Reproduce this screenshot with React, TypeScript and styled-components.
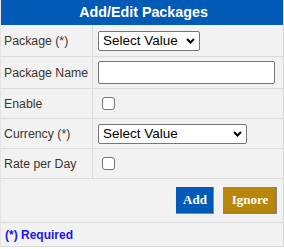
import React from "react";
import styled, { createGlobalStyle } from "styled-components";

const Global = createGlobalStyle`
  html, body { margin: 0; padding: 0; background: #ffffff; }
  body { font-family: Arial, "Liberation Sans", sans-serif; }
`;

const Panel = styled.div`
  width: 284px;
  box-sizing: border-box;
  border-right: 1px solid #d6d6d6;
  border-left: 1px solid #e4e4e4;
  background: #f2f2f2;
  display: flex;
  flex-direction: column;
`;

const Header = styled.div`
  height: 25px;
  background: #015bb6;
  color: #ffffff;
  font: bold 14.3px Arial, "Liberation Sans", sans-serif;
  display: flex;
  align-items: center;
  justify-content: center;
  box-sizing: border-box;
  padding-bottom: 1px;
  padding-left: 3px;
`;

const Row = styled.div<{ $h: number }>`
  display: grid;
  grid-template-columns: 92px 1fr;
  height: ${(p) => p.$h}px;
  border-bottom: 1px solid #dadada;
  box-sizing: border-box;
`;

const Label = styled.div`
  border-right: 1px solid #dadada;
  display: flex;
  align-items: center;
  padding-left: 3px;
  font: 12.3px Arial, "Liberation Sans", sans-serif;
  color: #3a3530;
`;

const Value = styled.div`
  display: flex;
  align-items: center;
  padding-left: 5px;
`;

const SelectWrap = styled.div<{ $w: number }>`
  position: relative;
  width: ${(p) => p.$w}px;
  height: 20px;
`;

const Select = styled.select`
  appearance: none;
  -webkit-appearance: none;
  width: 100%;
  height: 100%;
  box-sizing: border-box;
  border: 1px solid #767676;
  border-radius: 2px;
  background: #ffffff;
  font: 13.5px Arial, "Liberation Sans", sans-serif;
  color: #000000;
  padding: 0 0 0 4px;
  margin: 0;
  outline: none;
`;

const Chevron = styled.svg`
  position: absolute;
  right: 5px;
  top: 7px;
  pointer-events: none;
`;

const TextInput = styled.input`
  width: 177px;
  height: 23px;
  box-sizing: border-box;
  border: 1px solid #767676;
  border-radius: 2px;
  background: #ffffff;
  margin: 0;
  padding: 0 3px;
  font: 13.33px Arial, "Liberation Sans", sans-serif;
`;

const Check = styled.span`
  display: inline-block;
  width: 13px;
  height: 13px;
  box-sizing: border-box;
  margin-left: 4px;
  border: 1px solid #767676;
  border-radius: 3px;
  background: #ffffff;
`;

const ButtonRow = styled.div`
  height: 44px;
  display: flex;
  align-items: center;
  justify-content: flex-end;
  gap: 9px;
  padding-right: 6px;
  padding-bottom: 1px;
  border-bottom: 1px solid #dadada;
  box-sizing: border-box;
`;

const Btn = styled.button<{ $bg: string; $w: number }>`
  width: ${(p) => p.$w}px;
  height: 27px;
  box-sizing: border-box;
  border: none;
  margin: 0;
  padding: 0 0 1px 0;
  background: ${(p) => p.$bg};
  color: #ffffff;
  font: bold 13px "Liberation Serif", "Times New Roman", serif;
  box-shadow: inset -1px -1px 0 #8a8a8a, inset -2px -2px 0 rgba(0,0,0,0.08);
  cursor: pointer;
`;

const Footer = styled.div`
  height: 24px;
  display: flex;
  align-items: center;
  padding-left: 4px;
  font: bold 12px Arial, "Liberation Sans", sans-serif;
  color: #1a14f0;
  border-bottom: 1px solid #dadada;
  box-sizing: border-box;
`;

const ChevronIcon = () => (
  <Chevron width="9" height="6" viewBox="0 0 9 6">
    <path d="M1 1 L4.5 4.5 L8 1" fill="none" stroke="#000" strokeWidth="2" />
  </Chevron>
);

export default function App() {
  return (
    <>
      <Global />
      <Panel>
        <Header>Add/Edit Packages</Header>
        <Row $h={32}>
          <Label>Package (*)</Label>
          <Value>
            <SelectWrap $w={102}>
              <Select defaultValue="">
                <option value="">Select Value</option>
              </Select>
              <ChevronIcon />
            </SelectWrap>
          </Value>
        </Row>
        <Row $h={32}>
          <Label>Package Name</Label>
          <Value>
            <TextInput type="text" />
          </Value>
        </Row>
        <Row $h={30}>
          <Label>Enable</Label>
          <Value>
            <Check />
          </Value>
        </Row>
        <Row $h={30}>
          <Label>Currency (*)</Label>
          <Value>
            <SelectWrap $w={149}>
              <Select defaultValue="">
                <option value="">Select Value</option>
              </Select>
              <ChevronIcon />
            </SelectWrap>
          </Value>
        </Row>
        <Row $h={30}>
          <Label>Rate per Day</Label>
          <Value>
            <Check />
          </Value>
        </Row>
        <ButtonRow>
          <Btn $bg="#015bb6" $w={38}>Add</Btn>
          <Btn $bg="#b8860b" $w={54}>Ignore</Btn>
        </ButtonRow>
        <Footer>(*) Required</Footer>
      </Panel>
    </>
  );
}
